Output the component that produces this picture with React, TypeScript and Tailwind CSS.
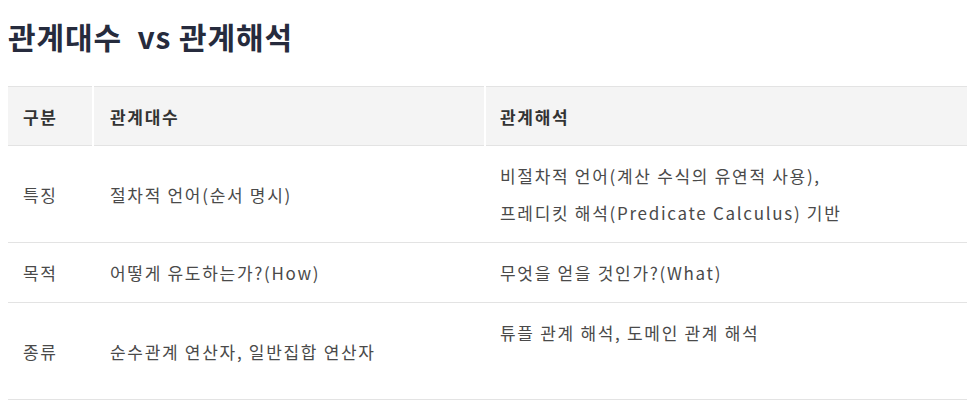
const rows: { label: string; algebra: string; calculus: string[] }[] = [
  {
    label: "특징",
    algebra: "절차적 언어(순서 명시)",
    calculus: ["비절차적 언어(계산 수식의 유연적 사용),", "프레디킷 해석(Predicate Calculus) 기반"],
  },
  {
    label: "목적",
    algebra: "어떻게 유도하는가?(How)",
    calculus: ["무엇을 얻을 것인가?(What)"],
  },
  {
    label: "종류",
    algebra: "순수관계 연산자, 일반집합 연산자",
    calculus: ["튜플 관계 해석, 도메인 관계 해석", "\u00a0"],
  },
];

const App = () => {
  return (
    <div className="min-h-screen bg-white px-2 pt-[14px] font-['Noto_Sans_CJK_KR','Noto_Sans',sans-serif]">
      <h1 className="text-[30px] font-bold leading-[44px] tracking-[0.9px] text-[#262b3d]">
        관계대수{"\u00a0 "}vs 관계해석
      </h1>
      <table className="mt-[28px] w-[959px] table-fixed border-collapse text-[17px] leading-[37px] tracking-[1.7px]">
        <colgroup>
          <col className="w-[85px]" />
          <col className="w-[392px]" />
          <col />
        </colgroup>
        <thead>
          <tr className="border-y border-[#e3e3e3] bg-[#f4f4f4] text-left">
            <th className="pt-[11px] pb-[10px] pl-[15px] font-semibold text-[#333]">구분</th>
            <th className="border-l-2 border-white pt-[11px] pb-[10px] pl-[16px] font-semibold text-[#333]">관계대수</th>
            <th className="border-l-2 border-white pt-[11px] pb-[10px] pl-[14px] font-semibold text-[#333]">관계해석</th>
          </tr>
        </thead>
        <tbody>
          {rows.map((r) => (
            <tr key={r.label} className="border-b border-[#e3e3e3] text-[#4a4a4a]">
              <td className="py-[11px] pl-[15px] align-middle">{r.label}</td>
              <td className="py-[11px] pl-[17px] align-middle">{r.algebra}</td>
              <td className="py-[11px] pl-[15px] align-middle">
                {r.calculus.map((line, i) => (
                  <div key={i}>{line}</div>
                ))}
              </td>
            </tr>
          ))}
        </tbody>
      </table>
    </div>
  );
};

export default App;
